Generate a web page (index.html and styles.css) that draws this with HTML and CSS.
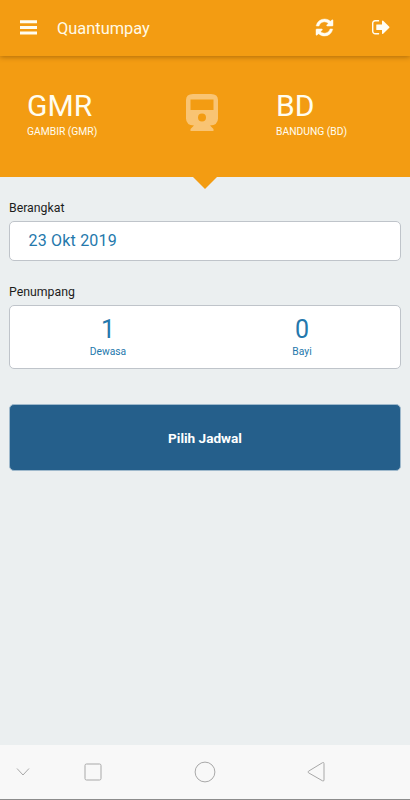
FILE: index.html
```html
<!DOCTYPE html>
<html lang="id">
    <head>
        <meta charset="utf-8">
        <title>Quantumpay</title>
        <meta name="viewport" content="width=device-width, initial-scale=1.0">
        <link rel="stylesheet" href="styles.css">
    </head>
    <body>
        <header class="toolbar">
            <svg class="icon_menu" viewBox="0 0 18 15">
                <path d="M0 0.3h17v2.900H0zM0 6h17v2.900H0zM0 11.500h17v2.900H0z" />
            </svg>
            <div class="title">Quantumpay</div>
            <svg class="icon_refresh" viewBox="0 128 1536 1536">
                <path d="M1511 1056q0 5-1 7-64 268-268 434.5t-478 166.5q-146 0-282.5-55t-243.5-157l-129 129q-19 19-45 19t-45-19-19-45v-448q0-26 19-45t45-19h448q26 0 45 19t19 45-19 45l-137 137q71 66 161 102t187 36q134 0 250-65t186-179q11-17 53-117 8-23 30-23h192q13 0 22.5 9.5t9.5 22.5zm25-800v448q0 26-19 45t-45 19h-448q-26 0-45-19t-19-45 19-45l138-138q-148-137-349-137-134 0-250 65t-186 179q-11 17-53 117-8 23-30 23h-199q-13 0-22.5-9.5t-9.5-22.5v-7q65-268 270-434.5t480-166.5q146 0 284 55.5t245 156.5l130-129q19-19 45-19t45 19 19 45z" />
            </svg>
            <svg class="icon_logout" viewBox="64 256 1568 1280">
                <path d="M704 1440q0 4 1 20t.5 26.5-3 23.5-10 19.5-20.5 6.5h-320q-119 0-203.5-84.5t-84.5-203.5v-704q0-119 84.5-203.5t203.5-84.5h320q13 0 22.5 9.5t9.5 22.5q0 4 1 20t.5 26.5-3 23.5-10 19.5-20.5 6.5h-320q-66 0-113 47t-47 113v704q0 66 47 113t113 47h312l11.5 1 11.5 3 8 5.5 7 9 2 13.5zm928-544q0 26-19 45l-544 544q-19 19-45 19t-45-19-19-45v-288h-448q-26 0-45-19t-19-45v-384q0-26 19-45t45-19h448v-288q0-26 19-45t45-19 45 19l544 544q19 19 19 45z" />
            </svg>
        </header>

        <section class="route">
            <div class="station">
                <div class="code">GMR</div>
                <div class="name">GAMBIR (GMR)</div>
            </div>
            <svg class="icon_train" viewBox="0 0 32 37">
                <path fill-rule="evenodd" d="M7 0H25Q32 0 32 6V24.500Q32 31 24 31.500L27.500 35V37H4.500V35L8 31.500Q0 31 0 24.500V6Q0 0 7 0zM4.500 5.500V16H27.500V5.500zM16 19.500a4 4 0 1 0 0 8a4 4 0 1 0 0-8z" />
            </svg>
            <div class="station arrival">
                <div class="code">BD</div>
                <div class="name">BANDUNG (BD)</div>
            </div>
        </section>

        <main class="form">
            <div class="label">Berangkat</div>
            <div class="box date">23 Okt 2019</div>

            <div class="label">Penumpang</div>
            <div class="box passengers">
                <div class="count">
                    <div class="number">1</div>
                    <div class="type">Dewasa</div>
                </div>
                <div class="count">
                    <div class="number">0</div>
                    <div class="type">Bayi</div>
                </div>
            </div>

            <button class="submit" type="button">Pilih Jadwal</button>
        </main>

        <footer class="navbar">
            <svg class="nav_hide" viewBox="0 0 14 10"><path d="M1 1.500L7 8L13 1.500" /></svg>
            <svg class="nav_recent" viewBox="0 0 18 18"><rect x="1" y="1" width="16" height="16" rx="1.500" /></svg>
            <svg class="nav_home" viewBox="0 0 22 22"><circle cx="11" cy="11" r="9.900" /></svg>
            <svg class="nav_back" viewBox="0 0 18 22"><path d="M15.500 1.700Q17 1 17 2.600V18.900Q17 20.500 15.500 19.800L1.500 11.800Q0.400 11 1.500 10.200z" /></svg>
        </footer>
    </body>
</html>
```

FILE: styles.css
```css
* {
    box-sizing: border-box;
}

body {
    display: flex;
    flex-direction: column;
    height: 800px;
    margin: 0;
    background: #ebeff0;
    font-family: Roboto, 'Liberation Sans', sans-serif;
    color: #1c1c1c;
}

svg {
    display: block;
    flex: none;
}

.toolbar {
    display: flex;
    align-items: center;
    height: 56px;
    padding: 0 20.500px 1px 20px;
    background: #f39c12;
    box-shadow: 0 1px 5px rgba(90,50,0,0.45);
    fill: #fffdf2;
    z-index: 1;
}

.icon_menu {
    width: 18px;
    height: 15px;
}

.title {
    flex: 1;
    padding: 1px 0 0 19px;
    font-size: 16.400px;
    color: #fffae6;
}

.icon_refresh {
    width: 17px;
    height: 17px;
    margin-right: 39px;
    stroke: #fffdf2;
    stroke-width: 40px;
    overflow: visible;
}

.icon_logout {
    width: 17.500px;
    height: 14.500px;
}

.route {
    position: relative;
    display: flex;
    height: 121px;
    padding: 32px 27px 0 27px;
    background: #f39c12;
    color: #fffdf0;
}

/* pointer under the route panel */
.route:after {
    content: '';
    position: absolute;
    left: 50%;
    top: 100%;
    margin-left: -12.500px;
    border: 12.500px solid transparent;
    border-top-color: #f39c12;
    border-bottom: 0;
}

.station {
    width: 159px;
}

.code {
    font-size: 30px;
    line-height: 36px;
}

.name {
    font-size: 10.300px;
    line-height: 16px;
}

.icon_train {
    width: 32px;
    height: 37px;
    margin-top: 6px;
    fill: #f9c473;
}

.arrival {
    padding-left: 58px;
    white-space: nowrap;
}

.form {
    flex: 1;
    padding: 22px 9px 0 9px;
}

.label {
    height: 22px;
    font-size: 12.300px;
    line-height: 18px;
}

.box {
    border: 1px solid #bfc4ca;
    border-radius: 5px;
    background: #ffffff;
    color: #2478ac;
}

.date {
    height: 40px;
    margin-bottom: 22px;
    padding-left: 18.500px;
    font-size: 16px;
    line-height: 38px;
    letter-spacing: 0.200px;
}

.passengers {
    display: flex;
    height: 64px;
    padding: 0 1px;
    margin-bottom: 35px;
}

.count {
    flex: 1;
    padding-top: 9px;
    text-align: center;
}

.number {
    font-size: 25px;
    line-height: 30px;
}

.type {
    font-size: 10.300px;
    line-height: 14px;
}

.submit {
    display: block;
    width: 100%;
    height: 67px;
    padding: 1px 0 0 0;
    border: 1px solid #9fb9cc;
    border-radius: 5px;
    background: #255f8b;
    font-family: inherit;
    font-size: 13.600px;
    font-weight: 700;
    color: #ffffff;
}

.navbar {
    display: flex;
    align-items: center;
    height: 55px;
    padding-left: 16px;
    border-bottom: 1px solid #8c8c8c;
    background: #f8f8f8;
    fill: none;
    stroke: #a8a8a8;
}

.nav_hide {
    width: 14px;
    height: 10px;
    margin-right: 54px;
}

.nav_recent {
    width: 18px;
    height: 18px;
    margin-right: 92px;
}

.nav_home {
    width: 22px;
    height: 22px;
    margin-right: 91px;
}

.nav_back {
    width: 18px;
    height: 22px;
}
```
